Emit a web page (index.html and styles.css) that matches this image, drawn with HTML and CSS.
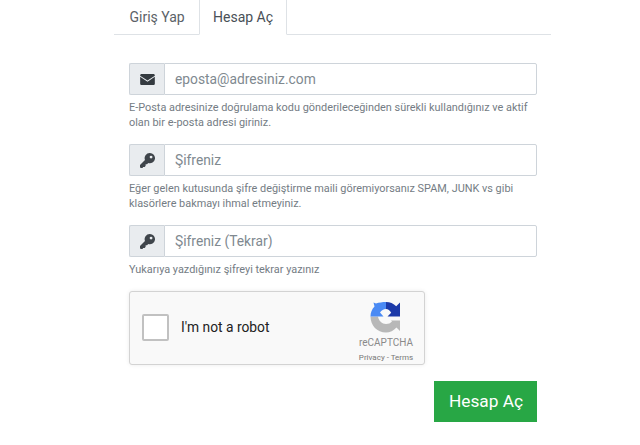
FILE: index.html
```html
<!DOCTYPE html>
<html lang="tr">
<head>
<meta charset="utf-8">
<title>Hesap Aç</title>
<link rel="stylesheet" href="styles.css">
</head>
<body>
<main class="panel">
  <nav class="tabs">
    <a class="tab">Giriş Yap</a>
    <a class="tab tab-active">Hesap Aç</a>
  </nav>
  <form class="form">
    <div class="field">
      <div class="group">
        <span class="addon">
          <svg class="icon" viewBox="0 0 16 12"><path d="M1.500 0h13c.8 0 1.500.7 1.500 1.500v.3L8 7.200 0 1.800v-.3C0 .7.7 0 1.500 0zM0 3 8 8.400 16 3v7.500c0 .8-.7 1.500-1.500 1.500h-13C.7 12 0 11.300 0 10.500z"/></svg>
        </span>
        <input class="input" type="text" placeholder="eposta@adresiniz.com">
      </div>
      <p class="help">E-Posta adresinize doğrulama kodu gönderileceğinden sürekli kullandığınız ve aktif<br>olan bir e-posta adresi giriniz.</p>
    </div>
    <div class="field">
      <div class="group">
        <span class="addon">
          <svg class="icon icon-key" viewBox="0 0 16 16"><path fill-rule="evenodd" d="M10.500 0a5.500 5.500 0 1 1-1.700 10.730L7.500 12H6v1.500L5 15H3v1H.8L0 15.200v-2.400l5.300-5.300A5.500 5.500 0 0 1 10.500 0zm1.300 2.800a1.500 1.500 0 1 0 0 3 1.500 1.500 0 0 0 0-3z"/></svg>
        </span>
        <input class="input" type="password" placeholder="Şifreniz">
      </div>
      <p class="help">Eğer gelen kutusunda şifre değiştirme maili göremiyorsanız SPAM, JUNK vs gibi<br>klasörlere bakmayı ihmal etmeyiniz.</p>
    </div>
    <div class="field">
      <div class="group">
        <span class="addon">
          <svg class="icon icon-key" viewBox="0 0 16 16"><path fill-rule="evenodd" d="M10.500 0a5.500 5.500 0 1 1-1.700 10.730L7.500 12H6v1.500L5 15H3v1H.8L0 15.200v-2.400l5.300-5.300A5.500 5.500 0 0 1 10.500 0zm1.300 2.800a1.500 1.500 0 1 0 0 3 1.500 1.500 0 0 0 0-3z"/></svg>
        </span>
        <input class="input" type="password" placeholder="Şifreniz (Tekrar)">
      </div>
      <p class="help">Yukarıya yazdığınız şifreyi tekrar yazınız</p>
    </div>
    <div class="captcha">
      <span class="check"></span>
      <span class="robot">I'm not a robot</span>
      <div class="brand">
        <svg class="logo" viewBox="0 0 32 32">
          <path fill="#b8b8b8" d="M.5 15.500H8C8.500 19.500 12 23 16 23c2.500 0 4.500-.8 6-2.500L21 19.500h9V30l-3.500-3.500C23.700 29.500 20 31.500 16 31.500 7 31.500.5 24.500.5 15.500z"/>
          <path fill="#4a8af4" d="M16 1v7c-2.500 0-4.500 1.500-6 3.500l3.500 4H.5c0-4 1.500-7.500 4-10L3.500 1.500l2.500 1C9 1.500 12.500 1 16 1z"/>
          <path fill="#1c3aa9" d="M16 1c4 0 7.500 1.500 10.200 4.300L30 1.500V15.500H17.500l3.700-3.800C20 9.500 18 8 16 8z"/>
        </svg>
        <span class="brand-name">reCAPTCHA</span>
        <span class="brand-links">Privacy - Terms</span>
      </div>
    </div>
    <div class="actions">
      <button class="submit" type="button">Hesap Aç</button>
    </div>
  </form>
</main>
</body>
</html>
```
FILE: styles.css
```css
* { box-sizing: border-box; }
html, body { margin: 0; padding: 0; background: #fff; }
body { font-family: Roboto, "Liberation Sans", sans-serif; color: #495057; height: 445px; overflow: hidden; }
.panel { width: 437px; margin-left: 114px; }
.tabs { display: flex; height: 35px; border-bottom: 1px solid #dee2e6; }
.tab { display: block; height: 35px; padding-top: 9px; font-size: 14px; line-height: 17px; color: #495057; white-space: nowrap; }
.tab:first-child { width: 85px; padding-left: 15.500px; color: #5b6268; }
.tab-active { width: 88px; padding-left: 13px; border: 1px solid #dee2e6; border-top: 0; border-bottom: 1px solid #fff; background: #fff; }
.form { padding: 28px 14px 0 15px; }
.field { margin-bottom: 14px; }
.group { display: flex; height: 32px; }
.addon { width: 35px; flex: none; display: flex; align-items: center; justify-content: center; background: #e9ecef; border: 1px solid #ced4da; border-right: 0; border-radius: 2px 0 0 2px; }
.icon { width: 15px; height: 11px; fill: #343a40; }
.icon-key { width: 15px; height: 15px; fill: #3f454b; }
.input { flex: 1; min-width: 0; height: 32px; padding: 0 10px; border: 1px solid #ced4da; border-radius: 0 2px 2px 0; font: 13.800px Roboto, sans-serif; color: #495057; background: #fff; outline: 0; }
.input::placeholder { color: #808990; opacity: 1; }
.help { margin: 5px 0 0; font-size: 10.900px; line-height: 15px; color: #747c84; }
.captcha { position: relative; display: flex; align-items: center; width: 296px; height: 74px; background: #f9f9f9; border: 1px solid #d3d3d3; border-radius: 3px; box-shadow: 0 0 4px rgba(0,0,0,.08); }
.check { width: 27px; height: 27px; margin-left: 12px; margin-bottom: 2px; background: #fff; border: 2px solid #c1c1c1; border-radius: 2px; }
.robot { margin-left: 12px; margin-bottom: 2px; font-size: 13.800px; color: #222; }
.brand { position: absolute; right: 11px; top: 9px; width: 54px; display: flex; flex-direction: column; align-items: center; }
.logo { width: 32px; height: 32px; margin-left: -1px; }
.brand-name { margin-top: 4px; font-size: 10px; line-height: 12px; color: #8a8a8a; white-space: nowrap; }
.brand-links { margin-top: 3px; font-size: 8px; line-height: 11px; color: #777; white-space: nowrap; }
.actions { display: flex; justify-content: flex-end; margin-top: 16px; }
.submit { width: 103px; height: 41px; background: #28a745; border: 0; border-radius: 0; color: #fff; font: 17.300px Roboto, sans-serif; padding: 0 0 2px 1px; }
```
